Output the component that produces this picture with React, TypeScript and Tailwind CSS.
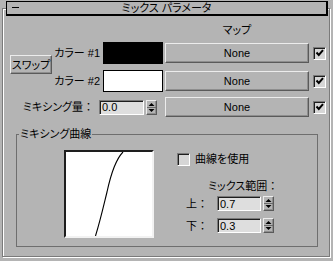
import type React from "react";

const FONT =
  "font-['Liberation_Sans','Noto_Sans_CJK_JP',sans-serif] [font-feature-settings:'palt']";

// 3D edges, old Win32 style
const raised =
  "border border-t-[#ececec] border-l-[#ececec] border-b-[#5a5a5a] border-r-[#5a5a5a] shadow-[inset_-1px_-1px_0_#8e8e8e]";
const sunken =
  "border border-t-[#7a7a7a] border-l-[#7a7a7a] border-b-white border-r-white shadow-[inset_1px_1px_0_#1e1e1e]";

function Colon() {
  return <span className="[font-feature-settings:normal]">：</span>;
}

function MapButton() {
  return (
    <div className={`flex h-[20px] w-[144px] items-center justify-center ${raised}`}>
      None
    </div>
  );
}

function CheckBox({ checked }: { checked: boolean }) {
  return (
    <div
      className={`flex h-[13px] w-[13px] shrink-0 items-center justify-center bg-[#d6d6d6] ${sunken}`}
    >
      {checked && (
        <svg width="9" height="9" viewBox="0 0 9 9">
          <path d="M1.5 3.5 L3.8 6 L8 1.2" fill="none" stroke="#000" strokeWidth="2" />
        </svg>
      )}
    </div>
  );
}

function Spinner({ value, width }: { value: string; width: string }) {
  return (
    <div className="flex items-center gap-[2px]">
      <div className={`flex h-[15px] ${width} items-center bg-[#dedede] pl-[2px] ${sunken}`}>
        {value}
      </div>
      <div className={`flex h-[15px] w-[11px] items-center justify-center ${raised}`}>
        <svg width="9" height="13" viewBox="0 0 9 13">
          <polygon points="4.5,2 7.5,5 1.5,5" fill="#000" />
          <line x1="0" y1="6.5" x2="9" y2="6.5" stroke="#6a6a6a" strokeWidth="1" />
          <polygon points="1.5,8 7.5,8 4.5,11" fill="#000" />
        </svg>
      </div>
    </div>
  );
}

export default function App() {
  return (
    <div
      className={`relative h-[261px] w-[333px] overflow-hidden bg-[#b4b4b4] pl-[2px] pt-[8px] text-[11px] leading-[14px] text-black ${FONT}`}
    >
      <div className="h-[249px] w-[328px] border border-[#7a7a7a] shadow-[inset_1px_1px_0_#fff,1px_1px_0_#fff]">
        {/* map header */}
        <div className="flex h-[33px] items-end pb-[5px] pl-[162px]">
          <div className="w-[144px] text-center">マップ</div>
        </div>

        {/* colour rows */}
        <div className="flex">
          <div
            className={`ml-[7px] mt-[13px] flex h-[19px] w-[42px] items-center justify-center ${raised}`}
          >
            スワップ
          </div>
          <div className="flex flex-col gap-[6px]">
            <div className="flex h-[22px] items-center">
              <div className="w-[48px] text-right">カラー #1</div>
              <div className="ml-[3px] h-[22px] w-[60px] bg-black" />
              <div className="ml-[2px]">
                <MapButton />
              </div>
              <div className="ml-[4px]">
                <CheckBox checked />
              </div>
            </div>
            <div className="flex h-[22px] items-center">
              <div className="w-[48px] text-right">カラー #2</div>
              <div className="ml-[3px] h-[22px] w-[60px] border border-black bg-white" />
              <div className="ml-[2px]">
                <MapButton />
              </div>
              <div className="ml-[4px]">
                <CheckBox checked />
              </div>
            </div>
          </div>
        </div>

        {/* mix amount */}
        <div className="mt-[5px] flex h-[20px] items-center">
          <div className="w-[91px] text-right">
            ミキシング量<Colon />
          </div>
          <div className="ml-[5px]">
            <Spinner value="0.0" width="w-[45px]" />
          </div>
          <div className="ml-[8px]">
            <MapButton />
          </div>
          <div className="ml-[4px]">
            <CheckBox checked />
          </div>
        </div>

        {/* mixing curve group */}
        <div className="relative ml-[13px] mt-[17px] flex h-[113px] w-[302px] border border-[#6e6e6e]">
          <div className="absolute left-[2px] top-[-8px] bg-[#b4b4b4] px-[1px]">ミキシング曲線</div>

          <div className="ml-[47px] mt-[15px] h-[88px] w-[90px] border-2 border-t-[#1e1e1e] border-l-[#1e1e1e] border-b-[#f2f2f2] border-r-[#f2f2f2] bg-white">
            <svg width="86" height="84" viewBox="0 0 86 84">
              <path
                d="M29.5 84 C35 66, 38 52, 41 40 C44 26, 49 8, 57 0"
                fill="none"
                stroke="#000"
                strokeWidth="1.1"
              />
            </svg>
          </div>

          <div className="ml-[23px] mt-[17px] flex flex-col">
            <div className="flex h-[14px] items-center">
              <CheckBox checked={false} />
              <span className="ml-[5px]">曲線を使用</span>
            </div>
            <div className="mt-[13px] pl-[31px]">
              ミックス範囲<Colon />
            </div>
            <div className="mt-[3px] flex h-[15px] items-center">
              <div className="w-[40px] pl-[9px]">
                上<Colon />
              </div>
              <Spinner value="0.7" width="w-[44px]" />
            </div>
            <div className="mt-[7px] flex h-[15px] items-center">
              <div className="w-[40px] pl-[9px]">
                下<Colon />
              </div>
              <Spinner value="0.3" width="w-[44px]" />
            </div>
          </div>
        </div>
      </div>

      {/* rollout title bar */}
      <div className="absolute left-[6px] top-[1px] flex h-[15px] w-[322px] items-center justify-center border border-b-2 border-r-2 border-black bg-[#b4b4b4] leading-[12px]">
        <div className="absolute left-[5px] top-[5px] h-[1px] w-[7px] bg-black" />
        ミックス パラメータ
      </div>
    </div>
  );
}
